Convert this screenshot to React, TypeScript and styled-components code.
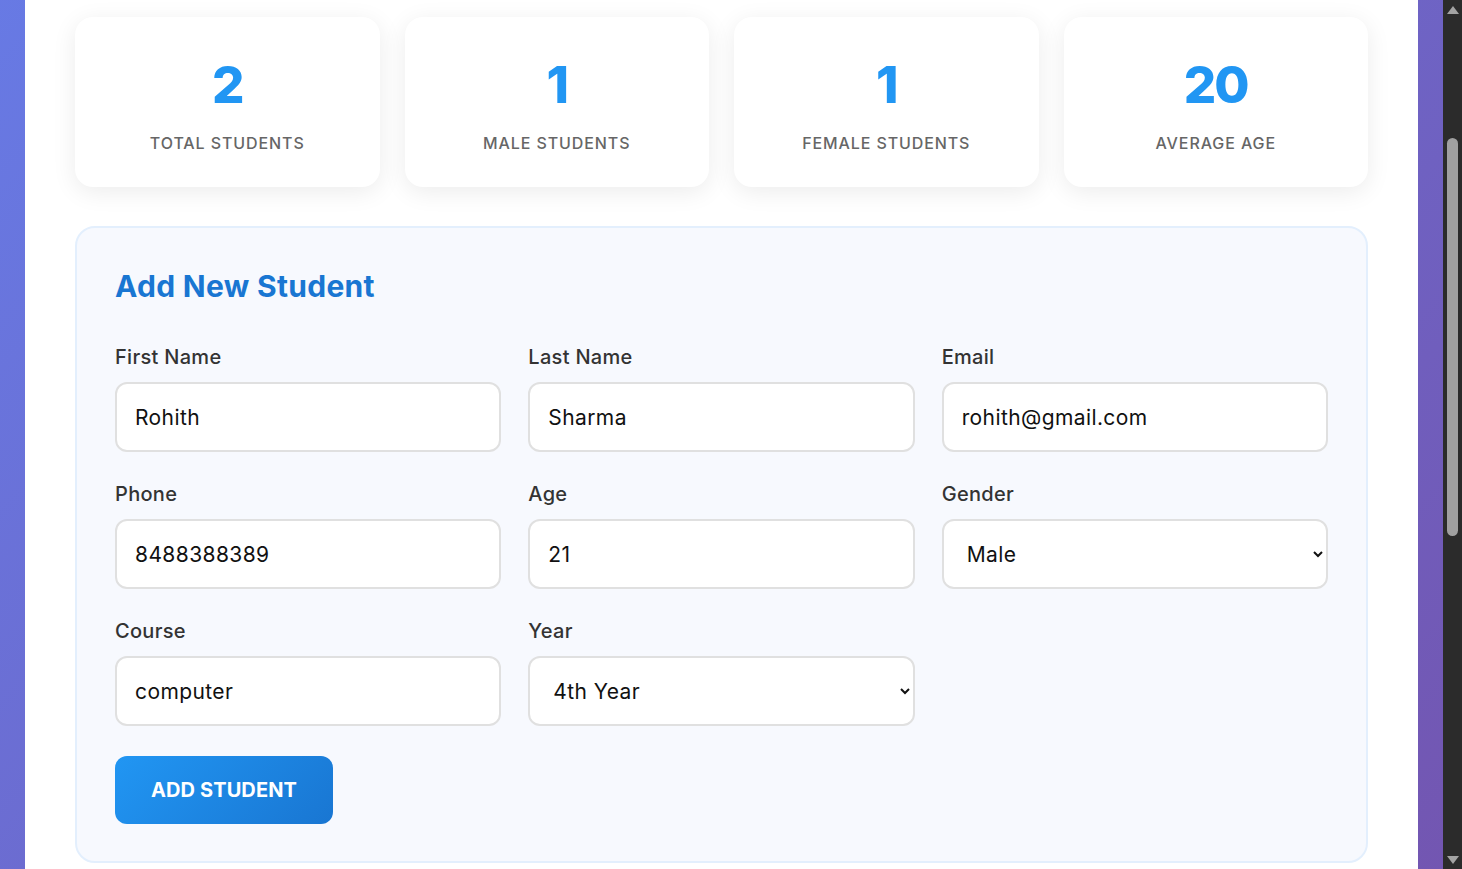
import React from "react";
import styled, { createGlobalStyle } from "styled-components";

const GlobalStyle = createGlobalStyle`
  html, body {
    margin: 0;
    padding: 0;
    height: 100%;
    overflow: hidden;
  }
  body {
    font-family: Inter, "Open Sans", "Liberation Sans", sans-serif;
    color: #333;
  }
  * { box-sizing: border-box; }
`;

const Screen = styled.div`
  display: flex;
  height: 100vh;
  width: 100vw;
`;

const Backdrop = styled.div`
  flex: 1;
  min-width: 0;
  padding: 0 25px;
  background: linear-gradient(135deg, #667eea 0%, #764ba2 100%);
  background-size: 100% 1840px;
  background-position: 0 -271px;
  overflow: hidden;
`;

const Container = styled.main`
  height: 100%;
  background: #ffffff;
  padding: 17px 50px 0;
  display: flex;
  flex-direction: column;
  gap: 39px;
`;

const StatsGrid = styled.section`
  display: grid;
  grid-template-columns: repeat(4, 1fr);
  gap: 25px;
`;

const StatCard = styled.div`
  height: 170px;
  background: #ffffff;
  border-radius: 18px;
  box-shadow: 0 5px 25px rgba(0, 0, 0, 0.08);
  display: flex;
  flex-direction: column;
  align-items: center;
  justify-content: center;
  gap: 24px;
  padding-top: 7px;
`;

const StatNumber = styled.div`
  font-size: 51px;
  font-weight: 800;
  line-height: 1;
  color: #2196f3;
  letter-spacing: -2px;
`;

const StatLabel = styled.div`
  font-size: 16px;
  line-height: 19px;
  font-weight: 500;
  color: #666;
  text-transform: uppercase;
  letter-spacing: 0.9px;
`;

const FormCard = styled.section`
  background: #f7f9fe;
  border: 2px solid #e3effd;
  border-radius: 20px;
  padding: 40px 38px 37px 38px;
`;

const FormTitle = styled.h2`
  margin: 0 0 40px;
  font-size: 30px;
  font-weight: 700;
  color: #1976d2;
  line-height: 1.2;
  letter-spacing: 0.3px;
`;

const FieldGrid = styled.div`
  display: grid;
  grid-template-columns: repeat(3, 1fr);
  column-gap: 27px;
  row-gap: 29px;
`;

const Field = styled.label`
  display: flex;
  flex-direction: column;
  gap: 11px;
`;

const FieldLabel = styled.span`
  font-size: 20px;
  font-weight: 500;
  color: #333;
  line-height: 27px;
  letter-spacing: 0.3px;
`;

const TextInput = styled.input`
  height: 70px;
  width: 100%;
  padding: 0 18px;
  border: 2px solid #e0e0e0;
  border-radius: 12px;
  background: #ffffff;
  font-family: inherit;
  font-size: 21px;
  letter-spacing: 0.4px;
  color: #111;
  outline: none;
`;

const SelectInput = styled.select`
  height: 70px;
  width: 100%;
  padding: 0 8px 0 19px;
  border: 2px solid #e0e0e0;
  border-radius: 12px;
  background: #ffffff;
  font-family: inherit;
  font-size: 21px;
  letter-spacing: 0.4px;
  color: #111;
  outline: none;
`;

const SubmitButton = styled.button`
  margin-top: 30px;
  width: 218px;
  height: 68px;
  border: none;
  border-radius: 12px;
  background: linear-gradient(135deg, #2196f3 0%, #1976d2 100%);
  color: #ffffff;
  font-family: inherit;
  font-size: 20px;
  font-weight: 700;
  letter-spacing: 0.1px;
  text-transform: uppercase;
  cursor: pointer;
`;

const ScrollTrack = styled.div`
  width: 19px;
  background: #2b2b2b;
  display: flex;
  flex-direction: column;
  align-items: center;
`;

const ScrollArrow = styled.div<{ $down?: boolean }>`
  width: 0;
  height: 0;
  margin: ${(p) => (p.$down ? "auto 0 5px" : "6px 0 0")};
  border-left: 6px solid transparent;
  border-right: 6px solid transparent;
  ${(p) =>
    p.$down
      ? "border-top: 8px solid #a3a3a3;"
      : "border-bottom: 8px solid #a3a3a3;"}
`;

const ScrollThumb = styled.div`
  width: 11px;
  height: 398px;
  margin-top: 124px;
  border-radius: 6px;
  background: #a0a0a0;
`;

const stats = [
  { value: "2", label: "Total Students" },
  { value: "1", label: "Male Students" },
  { value: "1", label: "Female Students" },
  { value: "20", label: "Average Age" },
];

export default function App() {
  return (
    <>
      <GlobalStyle />
      <Screen>
        <Backdrop>
          <Container>
            <StatsGrid>
              {stats.map((s) => (
                <StatCard key={s.label}>
                  <StatNumber>{s.value}</StatNumber>
                  <StatLabel>{s.label}</StatLabel>
                </StatCard>
              ))}
            </StatsGrid>
            <FormCard>
              <FormTitle>Add New Student</FormTitle>
              <FieldGrid>
                <Field>
                  <FieldLabel>First Name</FieldLabel>
                  <TextInput defaultValue="Rohith" />
                </Field>
                <Field>
                  <FieldLabel>Last Name</FieldLabel>
                  <TextInput defaultValue="Sharma" />
                </Field>
                <Field>
                  <FieldLabel>Email</FieldLabel>
                  <TextInput defaultValue="rohith@gmail.com" />
                </Field>
                <Field>
                  <FieldLabel>Phone</FieldLabel>
                  <TextInput defaultValue="8488388389" />
                </Field>
                <Field>
                  <FieldLabel>Age</FieldLabel>
                  <TextInput defaultValue="21" />
                </Field>
                <Field>
                  <FieldLabel>Gender</FieldLabel>
                  <SelectInput defaultValue="Male">
                    <option>Select Gender</option>
                    <option>Male</option>
                    <option>Female</option>
                  </SelectInput>
                </Field>
                <Field>
                  <FieldLabel>Course</FieldLabel>
                  <TextInput defaultValue="computer" />
                </Field>
                <Field>
                  <FieldLabel>Year</FieldLabel>
                  <SelectInput defaultValue="4th Year">
                    <option>1st Year</option>
                    <option>2nd Year</option>
                    <option>3rd Year</option>
                    <option>4th Year</option>
                  </SelectInput>
                </Field>
              </FieldGrid>
              <SubmitButton type="button">Add Student</SubmitButton>
            </FormCard>
          </Container>
        </Backdrop>
        <ScrollTrack>
          <ScrollArrow />
          <ScrollThumb />
          <ScrollArrow $down />
        </ScrollTrack>
      </Screen>
    </>
  );
}
